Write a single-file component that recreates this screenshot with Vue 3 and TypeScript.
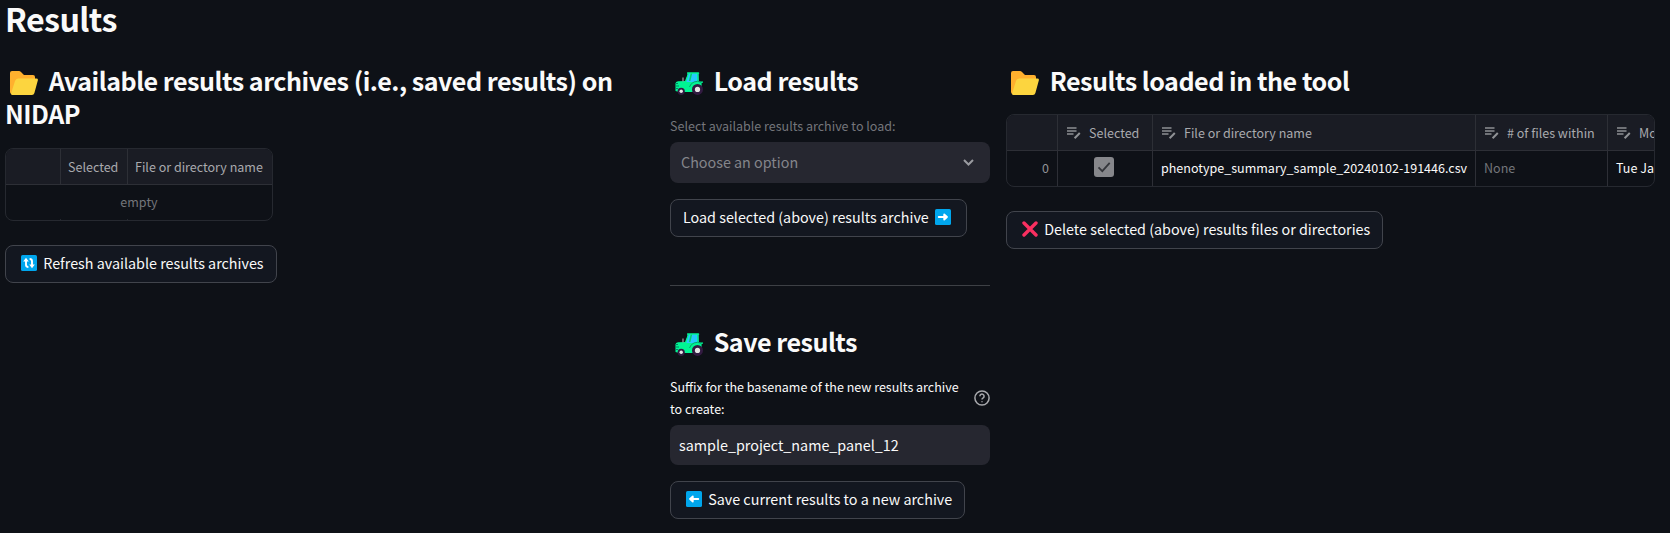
<script setup lang="ts">
import { ref } from 'vue'

interface Column {
  label: string
  key: string
}

const archiveColumns: Column[] = [
  { label: 'Selected', key: 'selected' },
  { label: 'File or directory name', key: 'name' },
]
const resultColumns: Column[] = [
  { label: 'Selected', key: 'selected' },
  { label: 'File or directory name', key: 'name' },
  { label: '# of files within', key: 'count' },
  { label: 'Modified', key: 'modified' },
]
const results = ref([
  {
    selected: true,
    name: 'phenotype_summary_sample_20240102-191446.csv',
    count: 'None',
    modified: 'Tue Jan 2',
  },
])
const suffix = ref('sample_project_name_panel_12')
</script>

<template>
  <main class="page">
    <svg class="defs" aria-hidden="true">
      <symbol id="folder" viewBox="0 0 28 24">
        <path d="M0 2Q0 0 2 0H9Q10 0 11 1L14 4H23Q25 4 25 6V10L8 23H2Q0 23 0 21Z" fill="#ffb02e" />
        <path d="M8.2 7.5H26.4Q28.4 7.5 27.8 9.5L24.4 22Q23.8 24 22 24H2.4Q.6 24 1.2 22L5 10Q5.8 7.5 8.2 7.5Z" fill="#fcd53f" />
      </symbol>
      <symbol id="tractor" viewBox="0 0 28 24">
        <path d="M13 2H23.5V13H10Z" fill="#26c9fc" />
        <path d="M15.7 2H17.3L15.4 10H13.9Z" fill="#00d26a" />
        <path d="M12 1.7Q12 1.2 12.6 1.2H23.4Q24.2 1.2 24.2 2V2.8H23.4L23.8 10.5H28V11.8H26.6V17.5L18 21H4L.5 20V12.5Q.5 10.5 3 10.3L10 9.9 12.8 2.8H12Z M14 2.8 11.3 11H22.2L22 2.8Z" fill="#00f593" fill-rule="evenodd" />
        <path d="M0 12.5H3M0 15H4M0 17.5H3" stroke="#008463" stroke-width="1" />
        <path d="M8 6.5V10.5" stroke="#9b9b9b" stroke-width="1.3" />
        <path d="M14.5 16A8 8 0 0 1 26 11.3" stroke="#00a66c" fill="none" />
        <circle cx="22.5" cy="18.4" r="5.5" fill="#321b41" />
        <circle cx="22.5" cy="18.4" r="2.6" fill="#e6e6e6" />
        <circle cx="6.2" cy="20.3" r="3.6" fill="#321b41" />
        <circle cx="6.2" cy="20.3" r="1.7" fill="#e6e6e6" />
      </symbol>
      <symbol id="refresh" viewBox="0 0 16 16">
        <rect width="16" height="16" rx="1.6" fill="#00a6ed" />
        <path d="M5 5V9.8Q5 12 7.4 12M11 11V6.2Q11 4 8.6 4" fill="none" stroke="#fff" stroke-width="1.9" />
        <path d="M2.2 6.6 5 2.8 7.8 6.6ZM8.2 9.4 11 13.2 13.8 9.4Z" fill="#fff" />
      </symbol>
      <symbol id="right" viewBox="0 0 16 16">
        <rect width="16" height="16" rx="1.6" fill="#00a6ed" />
        <path d="M3.7 8H10M9.2 5.4 12 8 9.2 10.6Z" fill="#fff" stroke="#fff" stroke-width="1.8" stroke-linecap="round" stroke-linejoin="round" />
      </symbol>
      <symbol id="left" viewBox="0 0 16 16">
        <rect width="16" height="16" rx="1.6" fill="#00a6ed" />
        <path d="M12.3 8H6M6.8 5.4 4 8 6.8 10.6Z" fill="#fff" stroke="#fff" stroke-width="1.8" stroke-linecap="round" stroke-linejoin="round" />
      </symbol>
      <symbol id="cross" viewBox="0 0 16 16">
        <path d="M2 2 14 14M14 2 2 14" stroke="#f92f60" stroke-width="3.4" stroke-linecap="round" />
      </symbol>
      <symbol id="edit" viewBox="0 0 14 12">
        <path d="M0 1H9.5M0 4H9.5M0 7H6.5" stroke="#707277" stroke-width="1.9" />
        <path d="M7.6 11.3 12.8 6" stroke="#909296" stroke-width="2" />
      </symbol>
    </svg>

    <h1>Results</h1>
    <div class="columns">
      <section>
        <h2><svg class="emoji"><use href="#folder" /></svg> Available results archives (i.e., saved results) on NIDAP</h2>
        <div class="table archives">
          <div class="row head">
            <div class="cell" />
            <div v-for="c in archiveColumns" :key="c.key" class="cell">{{ c.label }}</div>
          </div>
          <div class="empty">empty</div>
          <div class="row ticks"><i /><i /><i /></div>
        </div>
        <button type="button"><svg class="mini"><use href="#refresh" /></svg> Refresh available results archives</button>
      </section>

      <section>
        <h2><svg class="emoji"><use href="#tractor" /></svg> Load results</h2>
        <div class="label muted">Select available results archive to load:</div>
        <div class="field select">
          <span>Choose an option</span>
          <svg class="chevron" viewBox="0 0 11 7"><path d="M1 1 5.5 5.5 10 1" /></svg>
        </div>
        <button type="button" class="load">Load selected (above) results archive <svg class="mini"><use href="#right" /></svg></button>
        <hr />
        <h2 class="save-title"><svg class="emoji"><use href="#tractor" /></svg> Save results</h2>
        <div class="label help-label">
          <span>Suffix for the basename of the new results archive to create:</span>
          <svg class="help" viewBox="0 0 16 16">
            <circle cx="8" cy="8" r="7.1" />
            <path d="M5.9 6.2A2.1 2.1 0 1 1 9.2 7.9Q8 8.6 8 9.6" />
            <path d="M8 11.2V12.3" />
          </svg>
        </div>
        <div class="field"><input v-model="suffix" class="value" type="text" /></div>
        <button type="button" class="save"><svg class="mini"><use href="#left" /></svg> Save current results to a new archive</button>
      </section>

      <section>
        <h2><svg class="emoji"><use href="#folder" /></svg> Results loaded in the tool</h2>
        <div class="table loaded">
          <div class="row head">
            <div class="cell" />
            <div v-for="c in resultColumns" :key="c.key" class="cell">
              <svg class="edit"><use href="#edit" /></svg>{{ c.label }}
            </div>
          </div>
          <div v-for="(r, i) in results" :key="r.name" class="row body">
            <div class="cell index">{{ i }}</div>
            <div class="cell check">
              <svg viewBox="0 0 20 20"><rect width="20" height="20" rx="3" /><path v-if="r.selected" d="M4.5 10.4 8.3 14.2 15.7 5.8" /></svg>
            </div>
            <div class="cell">{{ r.name }}</div>
            <div class="cell none">{{ r.count }}</div>
            <div class="cell">{{ r.modified }}</div>
          </div>
        </div>
        <button type="button"><svg class="mini"><use href="#cross" /></svg> Delete selected (above) results files or directories</button>
      </section>
    </div>
  </main>
</template>

<style>
html,
body {
  margin: 0;
  background: #0e1117;
  overflow: hidden;
}
</style>

<style scoped>
.page {
  box-sizing: border-box;
  height: 533px;
  padding-left: 5px;
  overflow: hidden;
  background: #0e1117;
  color: #fafafa;
  font: 14.33px 'Noto Sans CJK SC', 'Noto Sans', sans-serif;
}
.defs {
  position: absolute;
  width: 0;
  height: 0;
}
h1 {
  margin: 0 0 27px;
  font-size: 32.2px;
  line-height: 36px;
  font-weight: 600;
  letter-spacing: -0.6px;
}
h2 {
  margin: 0.5px 0 0;
  font-size: 25.07px;
  line-height: 33px;
  font-weight: 600;
  letter-spacing: -0.48px;
}
.columns {
  display: grid;
  grid-template-columns: 649px 320px 649px;
  gap: 16px;
}
.emoji {
  width: 28px;
  height: 24px;
  margin: 0 5.5px 0 5px;
  vertical-align: -4px;
}
.mini {
  width: 16px;
  height: 16px;
  margin: 0 3px;
  vertical-align: -2px;
}
button {
  display: block;
  box-sizing: border-box;
  height: 38px;
  margin: 24px 0 0;
  padding: 0 12px 3px;
  border: 1px solid #41444c;
  border-radius: 8px;
  background: #131720;
  color: inherit;
  font: inherit;
  line-height: 33px;
  white-space: nowrap;
}
.table {
  box-sizing: border-box;
  height: 73px;
  border: 1px solid #262930;
  border-radius: 8px;
  overflow: hidden;
  font-size: 12.53px;
}
.row {
  display: grid;
}
.archives {
  width: 268px;
  margin-top: 18.5px;
}
.archives .row {
  grid-template-columns: 54px 67px 1fr;
}
.loaded {
  margin-top: 17.5px;
}
.loaded .row {
  grid-template-columns: 50px 95px 323px 132px 180px;
}
.cell {
  box-sizing: border-box;
  height: 35px;
  padding-left: 8px;
  border-left: 1px solid #2d2f36;
  line-height: 35px;
  white-space: nowrap;
}
.body .cell {
  line-height: 33px;
}
.cell:first-child {
  border-left: 0;
}
.head {
  border-bottom: 1px solid #2d2f36;
  background: #1a1c24;
  color: #a9aaae;
}
.archives .cell {
  padding-left: 7px;
}
.empty {
  height: 34px;
  line-height: 33px;
  text-align: center;
  color: #74767b;
}
.ticks i {
  height: 1px;
  border-left: 1px solid #262930;
}
.ticks i:first-child {
  border: 0;
}
.edit {
  width: 14px;
  height: 12px;
  margin: 0 8px 0 1px;
  vertical-align: -1px;
}
.index {
  padding-right: 8px;
  text-align: right;
  color: #929498;
}
.check svg {
  display: block;
  width: 20px;
  height: 20px;
  margin: 6px 0 0 28px;
  fill: #86878b;
}
.check path {
  fill: none;
  stroke: #34363b;
  stroke-width: 1.8;
}
.body .none {
  color: #74767b;
}
.label {
  font-size: 12.53px;
  line-height: 22px;
}
.muted {
  margin-top: 18px;
  color: #74767b;
}
.field {
  display: flex;
  align-items: center;
  box-sizing: border-box;
  height: 40px;
  padding-bottom: 1px;
  border-radius: 8px;
  background: #262730;
}
.select {
  height: 41px;
  margin-top: 5.5px;
  padding: 0 16px 2px 11px;
  justify-content: space-between;
  color: #84858b;
}
.chevron {
  width: 11px;
  height: 7px;
  margin-top: 2px;
  fill: none;
  stroke: #9a9ba0;
  stroke-width: 2;
}
.load,
.save {
  margin-top: 16px;
}
hr {
  height: 1px;
  margin: 48px 0 38.5px;
  border: 0;
  background: #3d4045;
}
.help-label {
  display: flex;
  align-items: center;
  justify-content: space-between;
  margin: 18px 0 5.5px;
}
.help-label span {
  width: 295px;
}
.help {
  width: 16px;
  height: 16px;
  fill: none;
  stroke: #a8a9ad;
  stroke-width: 1.5;
}
.value {
  width: 100%;
  padding: 0 9px;
  border: 0;
  outline: 0;
  background: none;
  color: inherit;
  font: inherit;
}
</style>
